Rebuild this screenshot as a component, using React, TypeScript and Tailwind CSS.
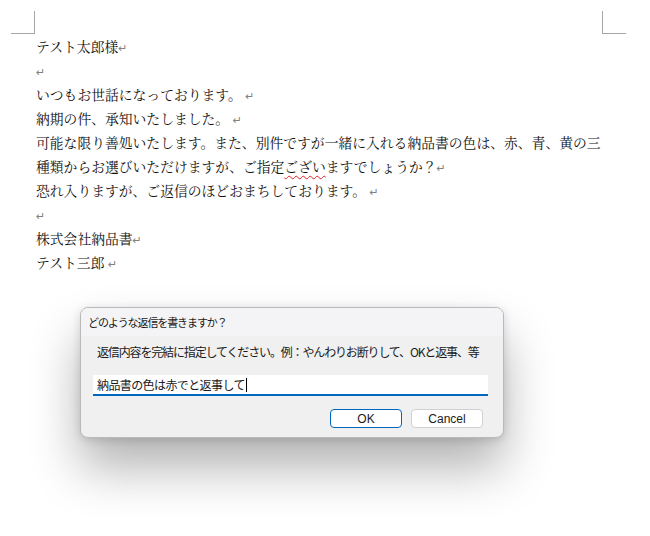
const DOC_FONT = "font-['Noto_Serif_CJK_JP','Noto_Sans_CJK_JP',serif]";
const UI_FONT = "font-['Noto_Sans_CJK_JP','Noto_Sans',sans-serif]";

function Ret({ gap = false }: { gap?: boolean }) {
  return (
    <span className="font-['DejaVu_Sans',sans-serif] text-[11px] text-[#808080]">
      {gap ? " " : ""}↵
    </span>
  );
}

function Line({ children }: { children?: React.ReactNode }) {
  return <div className="h-[24px] whitespace-nowrap leading-[24px]">{children}</div>;
}

function Letter() {
  return (
    <div className={`ml-[36px] text-[13.8px] text-[#111] ${DOC_FONT}`}>
      <Line>
        テスト太郎様<Ret />
      </Line>
      <Line>
        <Ret />
      </Line>
      <Line>
        いつもお世話になっております。<Ret gap />
      </Line>
      <Line>
        納期の件、承知いたしました。<Ret gap />
      </Line>
      <Line>可能な限り善処いたします。また、別件ですが一緒に入れる納品書の色は、赤、青、黄の三</Line>
      <Line>
        種類からお選びいただけますが、ご指定
        <span className="underline decoration-wavy decoration-[#e02020] decoration-1 underline-offset-[3px]">ござい</span>
        ますでしょうか？<Ret />
      </Line>
      <Line>
        恐れ入りますが、ご返信のほどおまちしております。<Ret gap />
      </Line>
      <Line>
        <Ret />
      </Line>
      <Line>
        株式会社納品書<Ret />
      </Line>
      <Line>
        テスト三郎<Ret gap />
      </Line>
    </div>
  );
}

function PromptDialog() {
  return (
    <div
      className={`ml-[80px] mt-[33px] w-[424px] overflow-hidden rounded-[8px] border border-[#b9b9b9] bg-[#f0f0f0] text-[#1a1a1a] shadow-[0_30px_50px_rgba(0,0,0,0.3),0_2px_10px_rgba(0,0,0,0.14)] ${UI_FONT}`}
    >
      <div className="flex h-[28px] items-center bg-[#f4f4f6] pl-[7px] text-[11px] tracking-[-1.1px]">
        どのような返信を書きますか？
      </div>
      <div className="px-[12px] pb-[9px] pt-[8px]">
        <div className="pl-[4px] text-[12px] leading-[16px] tracking-[-1.15px]">
          返信内容を完結に指定してください。例：やんわりお断りして、OKと返事、等
        </div>
        <div className="mt-[15px] mr-[3px] flex h-[21px] items-center border-b-2 border-[#0067c0] bg-white pl-[4px] text-[12px] tracking-[-0.6px]">
          <span>納品書の色は赤でと返事して</span>
          <span className="ml-[1px] inline-block h-[14px] w-px bg-black" />
        </div>
        <div className="mt-[13px] mr-[8px] flex justify-end gap-[9px] text-[12px]">
          <button className="h-[19px] w-[72px] rounded-[4px] border border-[#0067c0] bg-white leading-none font-['Liberation_Sans',sans-serif]">
            OK
          </button>
          <button className="h-[19px] w-[72px] rounded-[4px] border border-[#d0d0d0] bg-white leading-none font-['Liberation_Sans',sans-serif]">
            Cancel
          </button>
        </div>
      </div>
    </div>
  );
}

export default function App() {
  return (
    <div className="h-[536px] w-[650px] overflow-hidden bg-white">
      <div className="flex justify-between pl-[11px] pr-[24px] pt-[11px]">
        <div className="h-[23px] w-[24px] border-b border-r border-[#a6a6a6]" />
        <div className="h-[23px] w-[24px] border-b border-l border-[#a6a6a6]" />
      </div>
      <Letter />
      <PromptDialog />
    </div>
  );
}
